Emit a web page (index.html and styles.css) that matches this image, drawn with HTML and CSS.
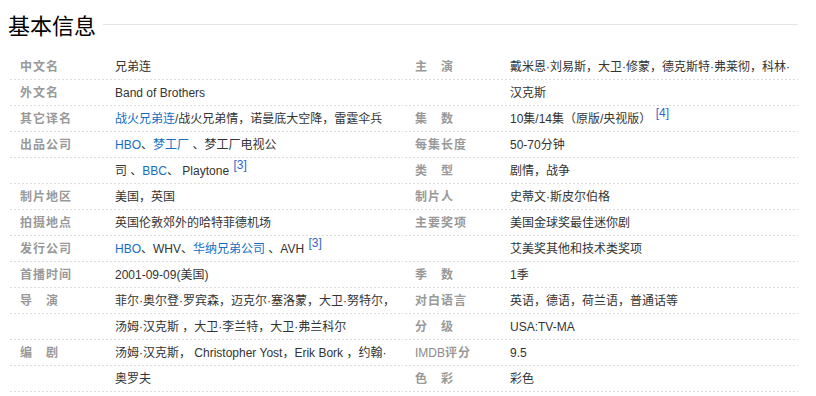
FILE: index.html
```html
<!DOCTYPE html>
<html lang="zh-CN">
<head>
<meta charset="utf-8">
<title>基本信息</title>
<link rel="stylesheet" href="styles.css">
</head>
<body>
<div class="page">
  <div class="title-bar">
    <h2 class="title">基本信息</h2>
    <span class="title-rule"></span>
  </div>
  <div class="info">
    <dl class="block">
      <dt class="name">中文名</dt>
      <dd class="value">兄弟连</dd>
      <dt class="name">外文名</dt>
      <dd class="value">Band of Brothers</dd>
      <dt class="name">其它译名</dt>
      <dd class="value"><a class="link" href="#">战火兄弟连</a>/战火兄弟情，诺曼底大空降，雷霆伞兵</dd>
      <dt class="name">出品公司</dt>
      <dd class="value"><a class="link" href="#">HBO</a>、<a class="link" href="#">梦工厂</a> 、梦工厂电视公<br>司 、<a class="link" href="#">BBC</a>、 Playtone <sup class="ref">[3]</sup></dd>
      <dt class="name">制片地区</dt>
      <dd class="value">美国，英国</dd>
      <dt class="name">拍摄地点</dt>
      <dd class="value">英国伦敦郊外的哈特菲德机场</dd>
      <dt class="name">发行公司</dt>
      <dd class="value"><a class="link" href="#">HBO</a>、WHV、<a class="link" href="#">华纳兄弟公司</a> 、AVH <sup class="ref">[3]</sup></dd>
      <dt class="name">首播时间</dt>
      <dd class="value">2001-09-09(美国)</dd>
      <dt class="name">导　演</dt>
      <dd class="value">菲尔·奥尔登·罗宾森，迈克尔·塞洛蒙，大卫·努特尔，<br>汤姆·汉克斯 ，大卫·李兰特，大卫·弗兰科尔</dd>
      <dt class="name">编　剧</dt>
      <dd class="value">汤姆·汉克斯， Christopher Yost，Erik Bork ，约翰·<br>奥罗夫</dd>
    </dl>
    <dl class="block">
      <dt class="name">主　演</dt>
      <dd class="value">戴米恩·刘易斯，大卫·修蒙，德克斯特·弗莱彻，科林·<br>汉克斯</dd>
      <dt class="name">集　数</dt>
      <dd class="value">10集/14集（原版/央视版） <sup class="ref">[4]</sup></dd>
      <dt class="name">每集长度</dt>
      <dd class="value">50-70分钟</dd>
      <dt class="name">类　型</dt>
      <dd class="value">剧情，战争</dd>
      <dt class="name">制片人</dt>
      <dd class="value">史蒂文·斯皮尔伯格</dd>
      <dt class="name">主要奖项</dt>
      <dd class="value">美国金球奖最佳迷你剧<br>艾美奖其他和技术类奖项</dd>
      <dt class="name">季　数</dt>
      <dd class="value">1季</dd>
      <dt class="name">对白语言</dt>
      <dd class="value">英语，德语，荷兰语，普通话等</dd>
      <dt class="name">分　级</dt>
      <dd class="value">USA:TV-MA</dd>
      <dt class="name"><span class="latin">IMDB</span>评分</dt>
      <dd class="value">9.5</dd>
      <dt class="name">色　彩</dt>
      <dd class="value">彩色</dd>
    </dl>
  </div>
</div>
</body>
</html>
```

FILE: styles.css
```css
* {
  box-sizing: border-box;
}

html, body {
  margin: 0;
  padding: 0;
  background: #fff;
}

body {
  font-family: "Liberation Sans", "Noto Sans CJK SC", sans-serif;
  font-size: 12px;
  color: #333;
}

.page {
  padding: 8px 18px 0 8px;
  width: 816px;
}

.title-bar {
  display: flex;
  align-items: center;
  height: 32px;
  margin-bottom: 14px;
}

.title {
  margin: 0;
  font-family: "Noto Sans CJK SC", sans-serif;
  font-size: 22px;
  font-weight: normal;
  line-height: 32px;
  color: #000;
  padding-right: 7px;
}

.title-rule {
  flex: 1;
  height: 1px;
  background: #e5e5e5;
}

.info {
  display: flex;
}

.block {
  width: 395px;
  margin: 0;
  display: grid;
  grid-template-columns: 107px 1fr;
  align-content: start;
  line-height: 26px;
  background-image:
    linear-gradient(to right, #fff 2px, transparent 2px),
    linear-gradient(to bottom, transparent 25px, #dcdcdc 25px);
  background-size: 4px 26px;
}

.name {
  margin: 0;
  padding: 0 5px 0 12px;
  font-weight: bold;
  color: #999;
  letter-spacing: 1px;
  white-space: nowrap;
}

.latin {
  letter-spacing: 0;
  font-weight: normal;
  color: #8a8a8a;
}

.value {
  margin: 0;
  color: #333;
}

.link {
  color: #136ec2;
  text-decoration: none;
}

.ref {
  font-size: 12px;
  line-height: 12px;
  color: #3366cc;
  vertical-align: 6px;
  padding: 0 2px 0 1px;
}
```
